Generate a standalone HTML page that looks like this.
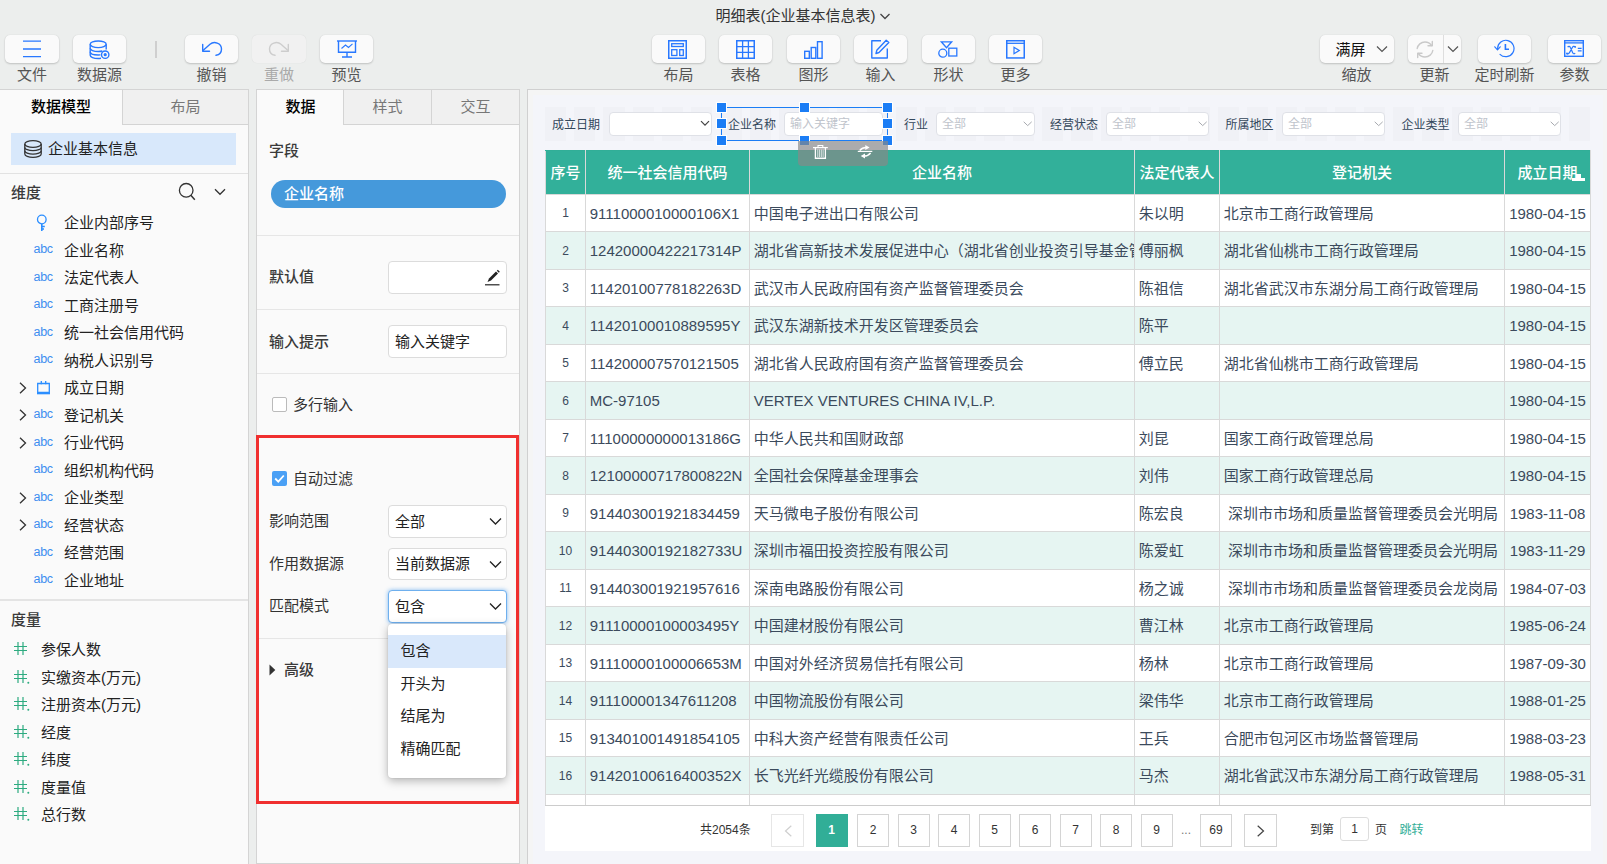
<!DOCTYPE html>
<html lang="zh-CN"><head><meta charset="utf-8"><title>明细表(企业基本信息表)</title><style>
*{box-sizing:border-box;margin:0;padding:0}
html,body{width:1607px;height:864px;overflow:hidden}
body{position:relative;background:#eceeed;font-family:"Liberation Sans","Noto Sans CJK SC",sans-serif;font-size:15px;color:#333}
.abs{position:absolute}
.tb{position:absolute;top:35px;height:28px;width:53.5px;background:#fafafa;border-radius:5px;box-shadow:0 1px 2px rgba(0,0,0,.18),0 0 1px rgba(0,0,0,.12)}
.tb svg{position:absolute;left:50%;top:50%;transform:translate(-50%,-50%)}
.tl{position:absolute;top:64px;height:22px;line-height:22px;font-size:15px;color:#555;text-align:center;white-space:nowrap;transform:translateX(-50%)}
.tl.dis{color:#aaa}
.panel{position:absolute;background:#fafafa}
.tab{position:absolute;top:0;height:35px;line-height:34px;text-align:center;font-size:15px;color:#777;background:#f0f0f0;border-bottom:1px solid #d4d4d4;border-left:1px solid #d4d4d4}
.tab.act{background:#fafafa;color:#000;font-weight:500;border-bottom:none;border-left:none}
.hl{position:absolute;height:1px;background:#e6e6e6}
.ti{position:absolute;left:0;height:27px;line-height:27px;white-space:nowrap;font-size:15px;color:#222}
.ti .tx{position:absolute;left:64px;top:0}
.ti .abc{position:absolute;left:33.5px;top:-.5px;font-size:12.5px;color:#3d8ef0;letter-spacing:-0.3px}
.ti svg{position:absolute}
.ms{position:absolute;left:0;height:27px;line-height:27px;white-space:nowrap;font-size:15px;color:#222}
.ms .tx{position:absolute;left:41px;top:0}
.lab{position:absolute;font-size:15px;color:#333;white-space:nowrap;height:24px;line-height:24px}
.lab.b{font-weight:500;color:#3a3a3a}
.inp{position:absolute;left:388px;width:119px;height:33px;background:#fff;border:1px solid #dcdcdc;border-radius:4px;line-height:31px;padding-left:6px;font-size:15px;color:#222;white-space:nowrap}
.flab{position:absolute;top:114px;margin-left:-.5px;height:22px;line-height:22px;font-size:12px;color:#33475b;white-space:nowrap}
.fsel{position:absolute;top:112px;height:24px;background:#fff;border:1px solid #dfe1e7;border-radius:4px;font-size:12px;line-height:22px;color:#c0c4cc;padding-left:5px;white-space:nowrap}
.fsel svg{position:absolute;right:4px;top:6px}
.hd{position:absolute;width:10px;height:10px;background:#1b7df5;border:1px solid #fff}
table{border-collapse:collapse;table-layout:fixed;position:absolute;left:0;top:0}
td,th{border:1px solid #d9d9d9;overflow:hidden;white-space:nowrap;font-size:15px;color:#3b4a5c;padding:0 0 0 3.75px;text-align:left;font-weight:normal}
th{background:#32b09a;color:#fff;font-weight:500;text-align:center;padding:0 0 2px 0;border-color:#d9d9d9;border-top-color:#31ae97}
tr.e td{background:#e6f5f2}
tr.o td{background:#fff}
td.c{padding-bottom:2px}
td.n{font-size:12px;text-align:center;padding:0}
td.d{text-align:right;padding:0 4px 0 0}
.pg{position:absolute;top:814px;width:32px;height:33px;border:1px solid #d4d4d4;background:#fff;font-size:12px;line-height:31px;text-align:center;color:#333}
.pg.cur{background:#31ae97;border-color:#31ae97;color:#fff}
.pt{position:absolute;font-size:12px;color:#333;white-space:nowrap;height:20px;line-height:20px}
</style></head><body>
<div class="abs" style="left:715.5px;top:5px;height:22px;line-height:22px;font-size:15px;color:#333;white-space:nowrap">明细表(企业基本信息表)</div>
<svg class="abs" style="left:879px;top:12px" width="12" height="9" viewBox="0 0 12 9" fill="none" ><path d="M1.5 2 L6 6.5 L10.5 2" stroke="#444" stroke-width="1.3"/></svg>
<div class="tb" style="left:5px;"></div>
<div class="tl" style="left:32px">文件</div>
<div class="tb" style="left:72.5px;"></div>
<div class="tl" style="left:99.5px">数据源</div>
<div class="tb" style="left:184.5px;"></div>
<div class="tl" style="left:211.5px">撤销</div>
<div class="tb" style="left:252px;background:#f1f1f1;box-shadow:0 0 1px rgba(0,0,0,.12)"></div>
<div class="tl dis" style="left:279px">重做</div>
<div class="tb" style="left:319.5px;"></div>
<div class="tl" style="left:346.5px">预览</div>
<div class="abs" style="left:155px;top:41px;width:2px;height:17px;background:#cfcfcf"></div>
<svg class="abs" style="left:23px;top:40px" width="18" height="18" viewBox="0 0 18 18" fill="none" ><path d="M0 1.2H18M0 9H18M0 16.6H18" stroke="#2878ff" stroke-width="1.3"/></svg>
<svg class="abs" style="left:89px;top:39.5px" width="21" height="20" viewBox="0 0 21 20" fill="none" ><g stroke="#2878ff" stroke-width="1.4"><ellipse cx="9.2" cy="4.3" rx="8" ry="3.3"/><path d="M1.2 4.3V15.2C1.2 17 4.6 18.5 9.2 18.5c1 0 1.9-.1 2.8-.2M17.2 4.3V9.5"/><path d="M1.2 8.2C1.2 10 4.6 11.5 9.2 11.5c1.6 0 3-.2 4.2-.5M1.2 11.8C1.2 13.6 4.6 15 9.2 15c.8 0 1.5 0 2.2-.1"/><circle cx="16.2" cy="14.7" r="3.7" fill="#fafafa"/></g><circle cx="16.2" cy="14.7" r="1.6" fill="#2878ff"/></svg>
<svg class="abs" style="left:201px;top:41px" width="23" height="16" viewBox="0 0 23 16" fill="none" ><g stroke="#2878ff" stroke-width="1.4" stroke-linecap="round" stroke-linejoin="round"><path d="M2 9.5L9 3.2C13 -0.3 20.5 2 20.5 8c0 3.5-2.5 5.8-5.5 6.3"/><path d="M1.7 3.5V10.2H8.5"/></g></svg>
<svg class="abs" style="left:267px;top:41px" width="23" height="16" viewBox="0 0 23 16" fill="none" ><g stroke="#cdcdcd" stroke-width="1.4" stroke-linecap="round" stroke-linejoin="round"><path d="M21 9.5L14 3.2C10 -0.3 2.5 2 2.5 8c0 3.5 2.5 5.8 5.5 6.3"/><path d="M21.3 3.5V10.2H14.5"/></g></svg>
<svg class="abs" style="left:337px;top:39.5px" width="20" height="18" viewBox="0 0 20 18" fill="none" ><g stroke="#2878ff" stroke-width="1.4"><path d="M0 1H20"/><path d="M1.5 1V12.3H18.5V1"/><path d="M10 12.3V16.5M5 17H15"/><path d="M4.5 8.5L8.5 5L11.5 7.5L15.5 3.8" stroke-width="1.1"/></g></svg>
<div class="tb" style="left:651.5px"></div>
<div class="tl" style="left:678.5px">布局</div>
<div class="tb" style="left:718.5px"></div>
<div class="tl" style="left:745.5px">表格</div>
<div class="tb" style="left:786.5px"></div>
<div class="tl" style="left:813.5px">图形</div>
<div class="tb" style="left:853.5px"></div>
<div class="tl" style="left:880.5px">输入</div>
<div class="tb" style="left:921.5px"></div>
<div class="tl" style="left:948.5px">形状</div>
<div class="tb" style="left:988.5px"></div>
<div class="tl" style="left:1015.5px">更多</div>
<svg class="abs" style="left:668px;top:40px" width="19" height="19" viewBox="0 0 19 19" fill="none" ><g stroke="#2878ff" stroke-width="1.5"><rect x=".75" y=".75" width="17.5" height="17.5"/><rect x="3.7" y="3.7" width="11.6" height="2.8" stroke-width="1.3"/><rect x="3.7" y="9.7" width="5.2" height="5.8" stroke-width="1.3"/><rect x="11.7" y="9.7" width="3.6" height="5.8" stroke-width="1.3"/></g></svg>
<svg class="abs" style="left:735.5px;top:40px" width="19" height="19" viewBox="0 0 19 19" fill="none" ><g stroke="#2878ff" stroke-width="1.5"><rect x=".75" y=".75" width="17.5" height="17.5"/><path d="M6.6 0V19M12.4 0V19M0 6.6H19M0 12.4H19" stroke-width="1.3"/></g></svg>
<svg class="abs" style="left:803.5px;top:41px" width="19" height="18" viewBox="0 0 19 18" fill="none" ><g stroke="#2878ff" stroke-width="1.4"><rect x=".7" y="10.3" width="4.6" height="7"/><rect x="7.2" y="6.5" width="4.6" height="10.8"/><rect x="13.5" y=".7" width="4.6" height="16.6"/></g></svg>
<svg class="abs" style="left:870.5px;top:39px" width="20" height="20" viewBox="0 0 20 20" fill="none" ><g stroke="#2878ff" stroke-width="1.4" stroke-linejoin="round"><path d="M10 1.7H.8V19H16.3V9.5" /><path d="M15.2 1.2L17.8 3.5L8 13.5L5 14.5L5.8 11.3Z"/></g></svg>
<svg class="abs" style="left:938px;top:40.5px" width="20" height="17" viewBox="0 0 20 17" fill="none" ><g stroke="#2878ff" stroke-width="1.3"><path d="M3.3 .8H13.7L8.5 6.8Z"/><circle cx="4.8" cy="12.2" r="4"/><rect x="10.8" y="7.2" width="8" height="7.8"/></g></svg>
<svg class="abs" style="left:1005.5px;top:40px" width="19" height="19" viewBox="0 0 19 19" fill="none" ><g stroke="#2878ff" stroke-width="1.5"><rect x=".75" y=".75" width="17.5" height="17.2"/><path d="M0 3.3H19" stroke-width="1.3"/><path d="M8 7.3V13.7L13.3 10.5Z" stroke-width="1.2"/></g></svg>
<div class="tb" style="left:1319.5px;width:74px"></div>
<div class="abs" style="left:1335.5px;top:39px;height:22px;line-height:22px;font-size:15px;color:#111">满屏</div>
<svg class="abs" style="left:1376px;top:44.5px" width="12" height="9" viewBox="0 0 12 9" fill="none" ><path d="M1 1.5L6 6.5L11 1.5" stroke="#555" stroke-width="1.2"/></svg>
<div class="tl" style="left:1356.5px">缩放</div>
<div class="tb" style="left:1407.5px"></div>
<div class="abs" style="left:1443px;top:35px;width:1px;height:28px;background:#dedede"></div>
<svg class="abs" style="left:1415px;top:40px" width="20" height="19" viewBox="0 0 20 19" fill="none" ><g stroke="#c9c9c9" stroke-width="1.4" fill="none" stroke-linecap="round" stroke-linejoin="round"><path d="M2.2 8.5C2.8 4.8 6 2 10 2c2.8 0 5.2 1.4 6.6 3.5"/><path d="M17.3 1.5V5.8H13"/><path d="M17.8 10.5C17.2 14.2 14 17 10 17c-2.8 0-5.2-1.4-6.6-3.5"/><path d="M2.7 17.5V13.2H7"/></g></svg>
<svg class="abs" style="left:1446.5px;top:44.5px" width="12" height="9" viewBox="0 0 12 9" fill="none" ><path d="M1 1.5L6 6.5L11 1.5" stroke="#555" stroke-width="1.2"/></svg>
<div class="tl" style="left:1434.5px">更新</div>
<div class="tb" style="left:1477.5px"></div>
<svg class="abs" style="left:1494px;top:39px" width="22" height="19" viewBox="0 0 22 19" fill="none" ><g stroke="#2878ff" stroke-width="1.2" fill="none" stroke-linecap="round" stroke-linejoin="round"><path d="M3.6 9.5A8.2 8.2 0 1 1 6 15.3"/><path d="M.8 7.8L3.5 10.8L6.2 7.8"/><path d="M11.4 5V10.2H15" stroke-width="1.6" stroke-linecap="butt" stroke-linejoin="miter"/></g></svg>
<div class="tl" style="left:1504.5px">定时刷新</div>
<div class="tb" style="left:1547.5px"></div>
<svg class="abs" style="left:1564px;top:40px" width="20" height="17" viewBox="0 0 20 17" fill="none" ><g stroke="#2878ff" fill="none"><rect x=".7" y=".7" width="18.6" height="15.6" stroke-width="1.4"/><path d="M0 2.9H20" stroke-width="1.3"/><path d="M13.8 8.4H17.6M13.8 10.8H17.6" stroke-width="1.2"/><path d="M3.6 7.2C4.6 5.9 5.9 6.1 6.5 7.7L8.6 12.5C9.2 14 10.3 14.2 11.2 13.2M11.2 6.8C10.1 5.9 9 6.3 8.2 7.7L5.6 12.4C4.8 13.8 3.8 14.3 3 13.5" stroke-width="1.2"/></g><circle cx="11.2" cy="6.9" r=".9" fill="#2878ff"/><circle cx="3" cy="13.5" r="1" fill="#2878ff"/></svg>
<div class="tl" style="left:1574.5px">参数</div>
<div class="panel" style="left:0;top:89px;width:249px;height:775px;border-right:1px solid #d4d4d4;border-top:1px solid #d4d4d4">
<div class="tab act" style="left:0;width:122px">数据模型</div>
<div class="tab" style="left:122px;width:126px">布局</div>
<div class="abs" style="left:11px;top:43px;width:225px;height:32px;background:#d8e8fb"></div>
<svg class="abs" style="left:24px;top:50px" width="18" height="18" viewBox="0 0 18 18" fill="none" ><g stroke="#333" stroke-width="1.3"><ellipse cx="9" cy="4" rx="8.2" ry="3.3"/><path d="M.8 4V14C.8 15.8 4.5 17.3 9 17.3S17.2 15.8 17.2 14V4"/><path d="M.8 7.4C.8 9.2 4.5 10.7 9 10.7S17.2 9.2 17.2 7.4M.8 10.8C.8 12.6 4.5 14.1 9 14.1S17.2 12.6 17.2 10.8"/></g></svg>
<div class="abs" style="left:48px;top:47px;height:24px;line-height:24px;font-size:15px;color:#222;white-space:nowrap">企业基本信息</div>
<div class="hl" style="left:0;top:83px;width:248px;background:#e2e2e2"></div>
<div class="abs" style="left:11px;top:90.5px;height:24px;line-height:24px;font-size:15px;color:#3a3a3a;font-weight:500">维度</div>
<svg class="abs" style="left:178px;top:92px" width="18" height="19" viewBox="0 0 18 19" fill="none" ><g stroke="#333" stroke-width="1.3"><circle cx="8.2" cy="8.3" r="6.8"/><path d="M12.8 13.3L16.8 17.8" stroke-width="1.5"/></g></svg>
<svg class="abs" style="left:213.5px;top:97.5px" width="12" height="8" viewBox="0 0 12 8" fill="none" ><path d="M1 1.3L6 6.3L11 1.3" stroke="#333" stroke-width="1.3"/></svg>
<div class="ti" style="top:119px">
<svg style="left:36px;top:4.5px" width="12" height="18" viewBox="0 0 12 18" fill="none"><circle cx="5.8" cy="5.5" r="4.3" stroke="#2b8eff" stroke-width="1.3"/><path d="M5.8 9.8V17" stroke="#2b8eff" stroke-width="1.6"/><path d="M6 12.5H8.8M6 15H8" stroke="#2b8eff" stroke-width="1.3"/></svg>
<span class="tx">企业内部序号</span></div>
<div class="ti" style="top:146.5px">
<span class="abc">abc</span>
<span class="tx">企业名称</span></div>
<div class="ti" style="top:174px">
<span class="abc">abc</span>
<span class="tx">法定代表人</span></div>
<div class="ti" style="top:201.5px">
<span class="abc">abc</span>
<span class="tx">工商注册号</span></div>
<div class="ti" style="top:229px">
<span class="abc">abc</span>
<span class="tx">统一社会信用代码</span></div>
<div class="ti" style="top:256.5px">
<span class="abc">abc</span>
<span class="tx">纳税人识别号</span></div>
<div class="ti" style="top:284px">
<svg style="left:19px;top:7.5px" width="8" height="12" viewBox="0 0 8 12" fill="none"><path d="M1 .8L6.5 6L1 11.2" stroke="#333" stroke-width="1.3"/></svg>
<svg style="left:36.5px;top:7px" width="13" height="14" viewBox="0 0 13 14" fill="none"><path d="M.7 2.5H12.3V11.5H.7Z" stroke="#2b8eff" stroke-width="1.3"/><path d="M0 12.3H13" stroke="#2b8eff" stroke-width="2"/><path d="M4.3 0V3.3M8.7 0V3.3" stroke="#2b8eff" stroke-width="1.3"/></svg>
<span class="tx">成立日期</span></div>
<div class="ti" style="top:311.5px">
<svg style="left:19px;top:7.5px" width="8" height="12" viewBox="0 0 8 12" fill="none"><path d="M1 .8L6.5 6L1 11.2" stroke="#333" stroke-width="1.3"/></svg>
<span class="abc">abc</span>
<span class="tx">登记机关</span></div>
<div class="ti" style="top:339px">
<svg style="left:19px;top:7.5px" width="8" height="12" viewBox="0 0 8 12" fill="none"><path d="M1 .8L6.5 6L1 11.2" stroke="#333" stroke-width="1.3"/></svg>
<span class="abc">abc</span>
<span class="tx">行业代码</span></div>
<div class="ti" style="top:366.5px">
<span class="abc">abc</span>
<span class="tx">组织机构代码</span></div>
<div class="ti" style="top:394px">
<svg style="left:19px;top:7.5px" width="8" height="12" viewBox="0 0 8 12" fill="none"><path d="M1 .8L6.5 6L1 11.2" stroke="#333" stroke-width="1.3"/></svg>
<span class="abc">abc</span>
<span class="tx">企业类型</span></div>
<div class="ti" style="top:421.5px">
<svg style="left:19px;top:7.5px" width="8" height="12" viewBox="0 0 8 12" fill="none"><path d="M1 .8L6.5 6L1 11.2" stroke="#333" stroke-width="1.3"/></svg>
<span class="abc">abc</span>
<span class="tx">经营状态</span></div>
<div class="ti" style="top:449px">
<span class="abc">abc</span>
<span class="tx">经营范围</span></div>
<div class="ti" style="top:476.5px">
<span class="abc">abc</span>
<span class="tx">企业地址</span></div>
<div class="hl" style="left:0;top:509px;width:248px;height:1.5px;background:#e4e4e4"></div>
<div class="abs" style="left:11px;top:517.5px;height:24px;line-height:24px;font-size:15px;color:#3a3a3a;font-weight:500">度量</div>
<div class="ms" style="top:546px">
<svg class="abs" style="left:14px;top:6px" width="16" height="15" viewBox="0 0 16 15" fill="none"><path d="M4 0V13M9 0V13M0 4.5H13M0 8.5H13" stroke="#2dab80" stroke-width="1.2"/></svg>
<span class="tx">参保人数</span></div>
<div class="ms" style="top:573.5px">
<svg class="abs" style="left:14px;top:6px" width="16" height="15" viewBox="0 0 16 15" fill="none"><path d="M4 0V13M9 0V13M0 4.5H13M0 8.5H13" stroke="#2dab80" stroke-width="1.2"/><circle cx="14.3" cy="12.8" r="1" fill="#2dab80"/></svg>
<span class="tx">实缴资本(万元)</span></div>
<div class="ms" style="top:601px">
<svg class="abs" style="left:14px;top:6px" width="16" height="15" viewBox="0 0 16 15" fill="none"><path d="M4 0V13M9 0V13M0 4.5H13M0 8.5H13" stroke="#2dab80" stroke-width="1.2"/><circle cx="14.3" cy="12.8" r="1" fill="#2dab80"/></svg>
<span class="tx">注册资本(万元)</span></div>
<div class="ms" style="top:628.5px">
<svg class="abs" style="left:14px;top:6px" width="16" height="15" viewBox="0 0 16 15" fill="none"><path d="M4 0V13M9 0V13M0 4.5H13M0 8.5H13" stroke="#2dab80" stroke-width="1.2"/><circle cx="14.3" cy="12.8" r="1" fill="#2dab80"/></svg>
<span class="tx">经度</span></div>
<div class="ms" style="top:656px">
<svg class="abs" style="left:14px;top:6px" width="16" height="15" viewBox="0 0 16 15" fill="none"><path d="M4 0V13M9 0V13M0 4.5H13M0 8.5H13" stroke="#2dab80" stroke-width="1.2"/><circle cx="14.3" cy="12.8" r="1" fill="#2dab80"/></svg>
<span class="tx">纬度</span></div>
<div class="ms" style="top:683.5px">
<svg class="abs" style="left:14px;top:6px" width="16" height="15" viewBox="0 0 16 15" fill="none"><path d="M4 0V13M9 0V13M0 4.5H13M0 8.5H13" stroke="#2dab80" stroke-width="1.2"/><circle cx="14.3" cy="12.8" r="1" fill="#2dab80"/></svg>
<span class="tx">度量值</span></div>
<div class="ms" style="top:711px">
<svg class="abs" style="left:14px;top:6px" width="16" height="15" viewBox="0 0 16 15" fill="none"><path d="M4 0V13M9 0V13M0 4.5H13M0 8.5H13" stroke="#2dab80" stroke-width="1.2"/><circle cx="14.3" cy="12.8" r="1" fill="#2dab80"/></svg>
<span class="tx">总行数</span></div>
</div>
<div class="panel" style="left:256px;top:89px;width:264px;height:775px;border:1px solid #d4d4d4"></div>
<div class="tab act" style="left:257px;top:90px;width:87px">数据</div>
<div class="tab" style="left:343px;top:90px;width:88px">样式</div>
<div class="tab" style="left:431px;top:90px;width:88px">交互</div>
<div class="lab b" style="left:269px;top:138.5px">字段</div>
<div class="abs" style="left:271px;top:180px;width:235px;height:28px;border-radius:14px;background:#4599db"></div>
<div class="abs" style="left:284px;top:182px;height:24px;line-height:24px;font-size:15px;color:#fff;font-weight:500;white-space:nowrap">企业名称</div>
<div class="hl" style="left:257px;top:235px;width:262px"></div>
<div class="lab b" style="left:269px;top:265px">默认值</div>
<div class="inp" style="top:261px"></div>
<svg class="abs" style="left:485px;top:269px" width="15" height="17" viewBox="0 0 15 17" fill="none" ><path d="M2.5 13L4 9.5L11 2.5L13 4.5L6 11.5Z" fill="#222"/><path d="M11.8 1.7L12.8 .7L14.8 2.7L13.8 3.7Z" fill="#222"/><path d="M0 15.8H14.5" stroke="#222" stroke-width="1.2"/></svg>
<div class="hl" style="left:257px;top:309px;width:262px"></div>
<div class="lab b" style="left:269px;top:329.5px">输入提示</div>
<div class="inp" style="top:325px">输入关键字</div>
<div class="hl" style="left:257px;top:373px;width:262px"></div>
<div class="abs" style="left:271.5px;top:397px;width:15px;height:15px;background:#fff;border:1px solid #bbb;border-radius:2px"></div>
<div class="lab" style="left:293px;top:393px">多行输入</div>
<div class="abs" style="left:256px;top:435px;width:263px;height:369px;border:3px solid #f0302f"></div>
<div class="abs" style="left:271.5px;top:471px;width:15px;height:15px;background:#4aa0f5;border-radius:2px"></div>
<svg class="abs" style="left:271.5px;top:471px" width="15" height="15" viewBox="0 0 15 15" fill="none" ><path d="M3.2 7.5L6.3 10.6L11.8 4.5" stroke="#fff" stroke-width="1.8"/></svg>
<div class="lab" style="left:293px;top:466.5px">自动过滤</div>
<div class="lab" style="left:269px;top:508.5px">影响范围</div>
<div class="inp" style="top:505px">全部</div>
<svg class="abs" style="left:488.5px;top:517px" width="13" height="9" viewBox="0 0 13 9" fill="none" ><path d="M1 1.5L6.5 7L12 1.5" stroke="#222" stroke-width="1.3"/></svg>
<div class="lab" style="left:269px;top:551.5px">作用数据源</div>
<div class="inp" style="top:548px;height:32px;line-height:30px">当前数据源</div>
<svg class="abs" style="left:488.5px;top:559.5px" width="13" height="9" viewBox="0 0 13 9" fill="none" ><path d="M1 1.5L6.5 7L12 1.5" stroke="#222" stroke-width="1.3"/></svg>
<div class="lab" style="left:269px;top:593.5px">匹配模式</div>
<div class="inp" style="top:590px;height:33px;border-color:#6fb0ee;box-shadow:0 0 4px rgba(80,160,240,.7)">包含</div>
<svg class="abs" style="left:488.5px;top:602px" width="13" height="9" viewBox="0 0 13 9" fill="none" ><path d="M1 1.5L6.5 7L12 1.5" stroke="#222" stroke-width="1.3"/></svg>
<div class="hl" style="left:259px;top:638px;width:129px"></div>
<svg class="abs" style="left:269px;top:663.5px" width="7" height="12" viewBox="0 0 7 12" fill="none" ><path d="M.5 .5L6.3 6L.5 11.5Z" fill="#333"/></svg>
<div class="lab b" style="left:284px;top:657.5px">高级</div>
<div class="abs" style="left:388px;top:623.5px;width:118px;height:154.5px;background:#fff;border-radius:4px;box-shadow:0 3px 10px rgba(0,0,0,.28),0 0 2px rgba(0,0,0,.15)"></div>
<div class="abs" style="left:388px;top:635px;width:118px;height:33px;background:#d9e8fb"></div>
<div class="lab" style="left:400.5px;top:639px;color:#222">包含</div>
<div class="lab" style="left:400.5px;top:671.5px;color:#222">开头为</div>
<div class="lab" style="left:400.5px;top:704px;color:#222">结尾为</div>
<div class="lab" style="left:400.5px;top:736.5px;color:#222">精确匹配</div>
<div class="abs" style="left:527px;top:89px;width:1090px;height:790px;background:#f5f5f5;border:1px solid #d0d0d0"></div>
<div class="abs" style="left:533px;top:95px;width:1070px;height:769px;background:#f4f5fa"></div>
<div class="abs" style="left:545px;top:107px;width:1046px;height:34px;background:repeating-linear-gradient(90deg,#f0f1f6 0,#f0f1f6 21.2px,#f4f5fa 21.2px,#f4f5fa 29.25px)"></div>
<div class="flab" style="left:552.5px">成立日期</div>
<div class="fsel" style="left:609px;width:103px"></div>
<svg class="abs" style="left:699.5px;top:120px" width="10" height="7" viewBox="0 0 10 7" fill="none" ><path d="M1 1.2L5 5.2L9 1.2" stroke="#444" stroke-width="1.2"/></svg>
<div class="flab" style="left:728.5px">企业名称</div>
<div class="fsel" style="left:784px;width:99px">输入关键字</div>
<div class="flab" style="left:904.5px">行业</div>
<div class="fsel" style="left:936px;width:98.5px">全部</div>
<svg class="abs" style="left:1022.5px;top:120.5px" width="10" height="6" viewBox="0 0 10 6" fill="none" ><path d="M.7 .8L4.7 4.6L8.7 .8" stroke="#a6a9ae" stroke-width="1"/></svg>
<div class="flab" style="left:1050.5px">经营状态</div>
<div class="fsel" style="left:1106px;width:103px">全部</div>
<svg class="abs" style="left:1197.5px;top:120.5px" width="10" height="6" viewBox="0 0 10 6" fill="none" ><path d="M.7 .8L4.7 4.6L8.7 .8" stroke="#a6a9ae" stroke-width="1"/></svg>
<div class="flab" style="left:1226px">所属地区</div>
<div class="fsel" style="left:1282px;width:103px">全部</div>
<svg class="abs" style="left:1373.5px;top:120.5px" width="10" height="6" viewBox="0 0 10 6" fill="none" ><path d="M.7 .8L4.7 4.6L8.7 .8" stroke="#a6a9ae" stroke-width="1"/></svg>
<div class="flab" style="left:1402px">企业类型</div>
<div class="fsel" style="left:1458px;width:103px">全部</div>
<svg class="abs" style="left:1549.5px;top:120.5px" width="10" height="6" viewBox="0 0 10 6" fill="none" ><path d="M.7 .8L4.7 4.6L8.7 .8" stroke="#a6a9ae" stroke-width="1"/></svg>
<div class="abs" style="left:545px;top:150px;width:1046px;height:655px;overflow:hidden;background:#fff">
<table style="width:1046px"><colgroup><col style="width:40px"><col style="width:164px"><col style="width:385px"><col style="width:85px"><col style="width:285px"><col style="width:86px"></colgroup>
<tr style="height:44px"><th>序号</th><th>统一社会信用代码</th><th>企业名称</th><th>法定代表人</th><th>登记机关</th><th>成立日期</th></tr>
<tr class="o" style="height:37px"><td class="n">1</td><td>9111000010000106X1</td><td class="c">中国电子进出口有限公司</td><td class="c">朱以明</td><td class="c">北京市工商行政管理局</td><td style="text-align:center;padding:0">1980-04-15</td></tr>
<tr class="e" style="height:38px"><td class="n">2</td><td>12420000422217314P</td><td class="c">湖北省高新技术发展促进中心（湖北省创业投资引导基金管理中心）</td><td class="c">傅丽枫</td><td class="c">湖北省仙桃市工商行政管理局</td><td style="text-align:center;padding:0">1980-04-15</td></tr>
<tr class="o" style="height:37px"><td class="n">3</td><td>11420100778182263D</td><td class="c">武汉市人民政府国有资产监督管理委员会</td><td class="c">陈祖信</td><td class="c">湖北省武汉市东湖分局工商行政管理局</td><td style="text-align:center;padding:0">1980-04-15</td></tr>
<tr class="e" style="height:38px"><td class="n">4</td><td>11420100010889595Y</td><td class="c">武汉东湖新技术开发区管理委员会</td><td class="c">陈平</td><td class="c"></td><td style="text-align:center;padding:0">1980-04-15</td></tr>
<tr class="o" style="height:37px"><td class="n">5</td><td>114200007570121505</td><td class="c">湖北省人民政府国有资产监督管理委员会</td><td class="c">傅立民</td><td class="c">湖北省仙桃市工商行政管理局</td><td style="text-align:center;padding:0">1980-04-15</td></tr>
<tr class="e" style="height:38px"><td class="n">6</td><td>MC-97105</td><td>VERTEX VENTURES CHINA IV,L.P.</td><td class="c"></td><td class="c"></td><td style="text-align:center;padding:0">1980-04-15</td></tr>
<tr class="o" style="height:37px"><td class="n">7</td><td>11100000000013186G</td><td class="c">中华人民共和国财政部</td><td class="c">刘昆</td><td class="c">国家工商行政管理总局</td><td style="text-align:center;padding:0">1980-04-15</td></tr>
<tr class="e" style="height:38px"><td class="n">8</td><td>12100000717800822N</td><td class="c">全国社会保障基金理事会</td><td class="c">刘伟</td><td class="c">国家工商行政管理总局</td><td style="text-align:center;padding:0">1980-04-15</td></tr>
<tr class="o" style="height:37px"><td class="n">9</td><td>914403001921834459</td><td class="c">天马微电子股份有限公司</td><td class="c">陈宏良</td><td class="c">&nbsp;深圳市市场和质量监督管理委员会光明局</td><td style="text-align:center;padding:0">1983-11-08</td></tr>
<tr class="e" style="height:38px"><td class="n">10</td><td>91440300192182733U</td><td class="c">深圳市福田投资控股有限公司</td><td class="c">陈爱虹</td><td class="c">&nbsp;深圳市市场和质量监督管理委员会光明局</td><td style="text-align:center;padding:0">1983-11-29</td></tr>
<tr class="o" style="height:37px"><td class="n">11</td><td>914403001921957616</td><td class="c">深南电路股份有限公司</td><td class="c">杨之诚</td><td class="c">&nbsp;深圳市市场和质量监督管理委员会龙岗局</td><td style="text-align:center;padding:0">1984-07-03</td></tr>
<tr class="e" style="height:38px"><td class="n">12</td><td>91110000100003495Y</td><td class="c">中国建材股份有限公司</td><td class="c">曹江林</td><td class="c">北京市工商行政管理局</td><td style="text-align:center;padding:0">1985-06-24</td></tr>
<tr class="o" style="height:37px"><td class="n">13</td><td>91110000100006653M</td><td class="c">中国对外经济贸易信托有限公司</td><td class="c">杨林</td><td class="c">北京市工商行政管理局</td><td style="text-align:center;padding:0">1987-09-30</td></tr>
<tr class="e" style="height:38px"><td class="n">14</td><td>911100001347611208</td><td class="c">中国物流股份有限公司</td><td class="c">梁伟华</td><td class="c">北京市工商行政管理局</td><td style="text-align:center;padding:0">1988-01-25</td></tr>
<tr class="o" style="height:37px"><td class="n">15</td><td>913401001491854105</td><td class="c">中科大资产经营有限责任公司</td><td class="c">王兵</td><td class="c">合肥市包河区市场监督管理局</td><td style="text-align:center;padding:0">1988-03-23</td></tr>
<tr class="e" style="height:38px"><td class="n">16</td><td>91420100616400352X</td><td class="c">长飞光纤光缆股份有限公司</td><td class="c">马杰</td><td class="c">湖北省武汉市东湖分局工商行政管理局</td><td style="text-align:center;padding:0">1988-05-31</td></tr>
<tr class="o" style="height:37px"><td class="n"></td><td></td><td class="c"></td><td class="c"></td><td class="c"></td><td style="text-align:center;padding:0"></td></tr>
</table></div>
<div class="abs" style="left:1576px;top:173.5px;width:4.5px;height:4.5px;background:#fff"></div><div class="abs" style="left:1572px;top:177.5px;width:13px;height:3.3px;background:#fff"></div>
<div class="abs" style="left:721px;top:107px;width:167px;height:34px;border:1px solid #1b7df5"></div>
<div class="hd" style="left:716px;top:102px;width:11px;height:11px"></div>
<div class="hd" style="left:716px;top:118px;width:11px;height:11px"></div>
<div class="hd" style="left:716px;top:135px;width:11px;height:11px"></div>
<div class="hd" style="left:799px;top:102px;width:11px;height:11px"></div>
<div class="hd" style="left:799px;top:135px;width:11px;height:11px"></div>
<div class="hd" style="left:882px;top:102px;width:11px;height:11px"></div>
<div class="hd" style="left:882px;top:118px;width:11px;height:11px"></div>
<div class="hd" style="left:882px;top:135px;width:11px;height:11px"></div>
<div class="abs" style="left:798px;top:141px;width:90px;height:25px;background:rgba(136,136,136,.68);border-radius:0 0 4px 4px"></div>
<svg class="abs" style="left:812px;top:144px" width="17" height="16" viewBox="0 0 17 16" fill="none" ><g stroke="#fff" fill="none"><path d="M1 3.6H15.8" stroke-width="1.2"/><path d="M6 3.4V1.5H10.8V3.4" stroke-width="1.1"/><path d="M3.4 4V14.3H13.4V4" stroke-width="1.3"/><path d="M3 14.3H13.8" stroke-width="1.3"/><path d="M5.8 5.5V13M7.6 5.5V13M9.3 5.5V13M11.1 5.5V13" stroke-width=".9" opacity=".85"/></g></svg>
<svg class="abs" style="left:857px;top:144px" width="17" height="16" viewBox="0 0 17 16" fill="none" ><g stroke="#fff" fill="none"><path d="M.8 7.4H15.3" stroke-width="1.2"/><path d="M2.7 6.4C4.5 4.3 6.5 3.4 9 3.4" stroke-width="1.5"/><path d="M13.6 8.9C11.8 11 9.8 12 7.3 12" stroke-width="1.5"/></g><path d="M8.3 1L12.6 3.5L8.3 6Z" fill="#fff"/><path d="M8 9.4L3.7 12L8 14.6Z" fill="#fff"/></svg>
<div class="abs" style="left:545px;top:805px;width:1046px;height:46px;background:#fff;border-top:1px solid #ccc"></div>
<div class="pt" style="left:700px;top:820px">共2054条</div>
<div class="pg" style="left:771px;width:33px;border-color:#e6e6e6"></div>
<svg class="abs" style="left:783.5px;top:824.5px" width="9" height="12" viewBox="0 0 9 12" fill="none" ><path d="M7.3 .8L1.5 6L7.3 11.2" stroke="#cfcfcf" stroke-width="1.2" fill="none"/></svg>
<div class="pg cur" style="left:815.5px"><b>1</b></div>
<div class="pg" style="left:857px">2</div>
<div class="pg" style="left:897.5px">3</div>
<div class="pg" style="left:938px">4</div>
<div class="pg" style="left:978.5px">5</div>
<div class="pg" style="left:1019px">6</div>
<div class="pg" style="left:1059.5px">7</div>
<div class="pg" style="left:1100px">8</div>
<div class="pg" style="left:1140.5px">9</div>
<div class="pt" style="left:1181px;top:820px;color:#777">...</div>
<div class="pg" style="left:1200px">69</div>
<div class="pg" style="left:1244px;width:33px"></div>
<svg class="abs" style="left:1256px;top:824.5px" width="9" height="12" viewBox="0 0 9 12" fill="none" ><path d="M1.7 .8L7.5 6L1.7 11.2" stroke="#444" stroke-width="1.2" fill="none"/></svg>
<div class="pt" style="left:1310px;top:820px">到第</div>
<div class="abs" style="left:1340px;top:817px;width:29px;height:24px;border:1px solid #ddd;border-radius:3px;background:#fff;font-size:12px;line-height:22px;text-align:center;color:#333">1</div>
<div class="pt" style="left:1375px;top:820px">页</div>
<div class="pt" style="left:1399.5px;top:820px;color:#31ae97">跳转</div>
</body></html>
